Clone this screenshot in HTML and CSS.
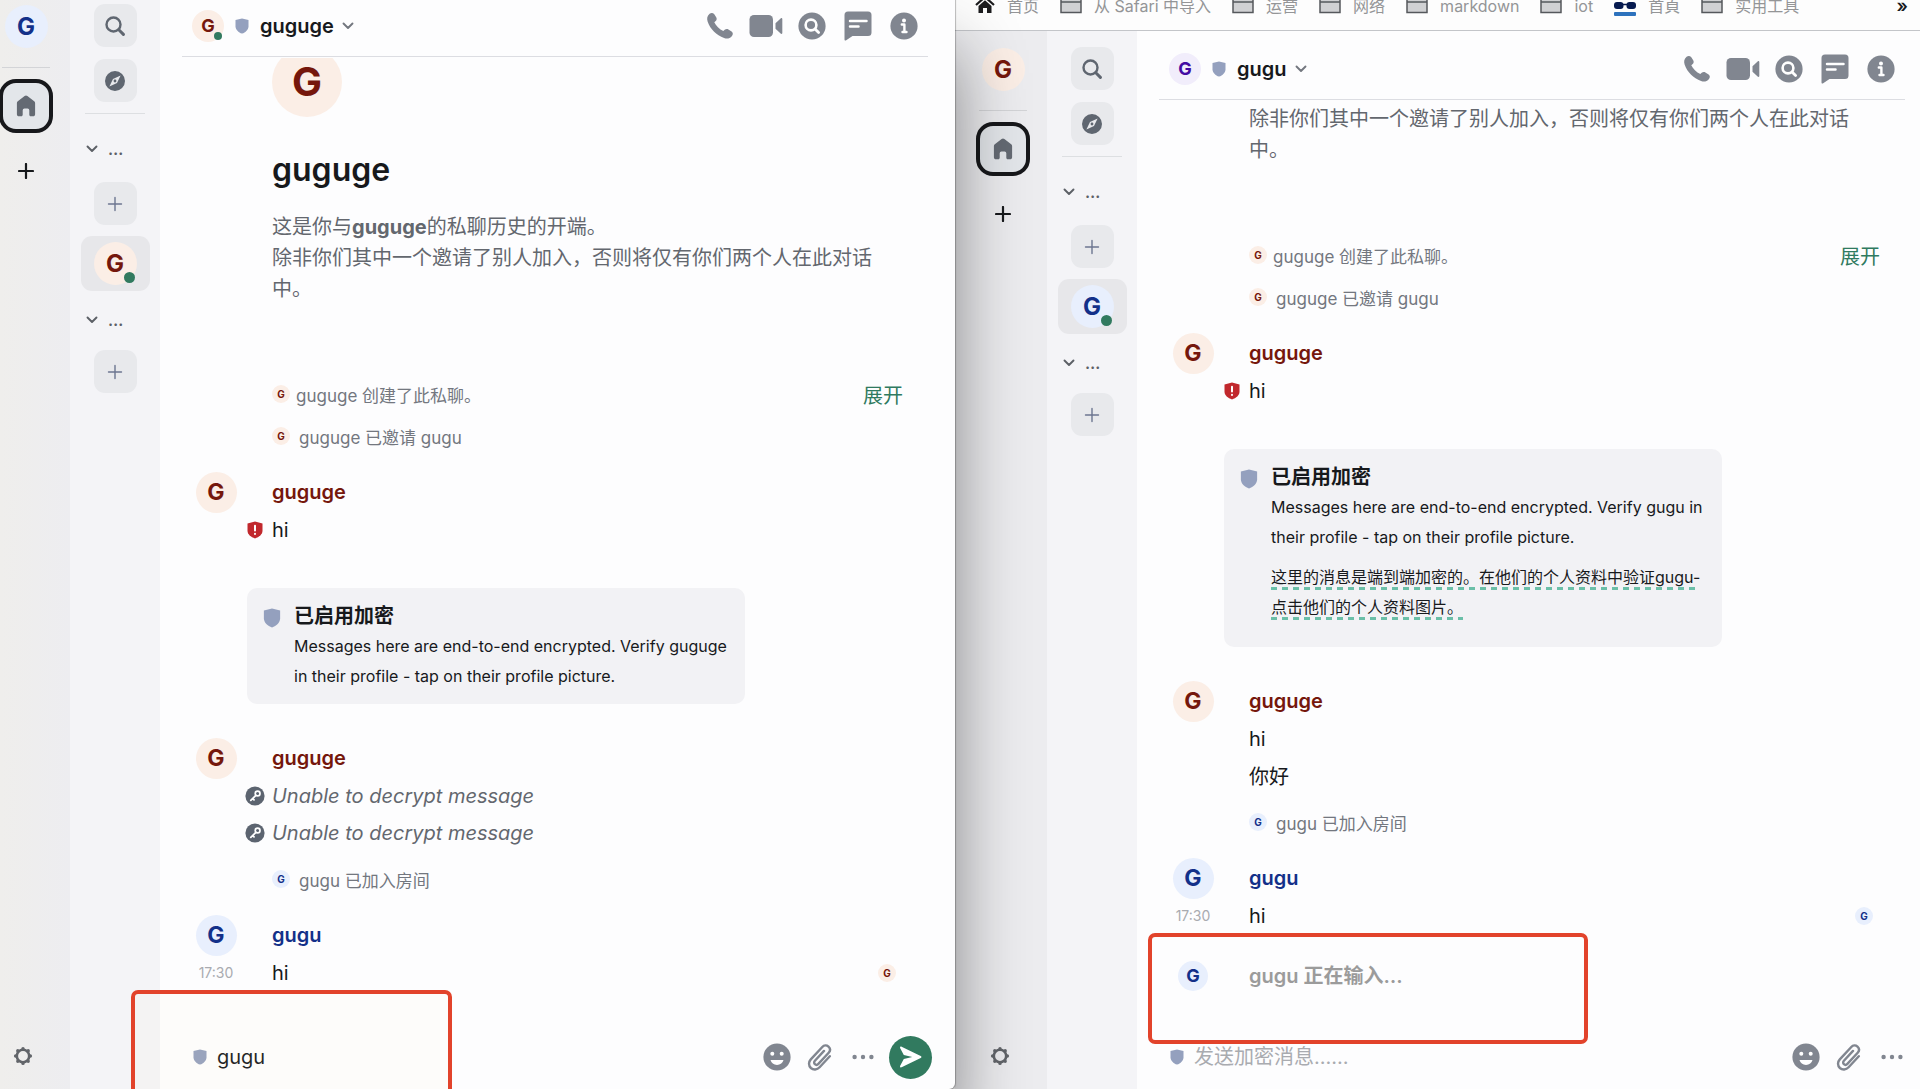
FILE: index.html
```html
<!DOCTYPE html>
<html lang="zh-CN">
<head>
<meta charset="utf-8">
<title>guguge</title>
<link rel="stylesheet" href="styles.css">
</head>
<body>
<svg class="sprite" aria-hidden="true">
  <symbol id="i-search" viewBox="0 0 20 20"><circle cx="8.5" cy="8.5" r="7" fill="none" stroke="currentColor" stroke-width="2.4"/><path d="M13.8 13.8 18.4 18.4" stroke="currentColor" stroke-width="3" stroke-linecap="round"/></symbol>
  <symbol id="i-compass" viewBox="0 0 20 20"><path fill="currentColor" fill-rule="evenodd" d="M10 0a10 10 0 1 0 0 20 10 10 0 0 0 0-20ZM15.6 4.4 12 12l-7.6 3.6L8 8l7.600-3.600ZM10 8.600a1.400 1.400 0 1 0 0 2.800 1.400 1.400 0 0 0 0-2.800Z"/></symbol>
  <symbol id="i-home" viewBox="0 0 20 22"><path fill="currentColor" d="M8.600 1.100a2.200 2.200 0 0 1 2.800 0l6.800 5.200c.6.5.9 1.100.9 1.800v11.100c0 1.300-.9 2.100-2.100 2.100h-2.200c-.9 0-1.500-.6-1.500-1.500v-4.600a1.700 1.700 0 0 0-1.700-1.700H8.400a1.700 1.700 0 0 0-1.700 1.700v4.600c0 .9-.6 1.500-1.500 1.500H3c-1.200 0-2.100-.8-2.100-2.100V8.100c0-.7.3-1.300.9-1.800Z"/></symbol>
  <symbol id="i-plus" viewBox="0 0 16 16"><path d="M8 1v14M1 8h14" stroke="currentColor" stroke-width="2.200" stroke-linecap="round"/></symbol>
  <symbol id="i-plus-thin" viewBox="0 0 16 16"><path d="M8 1.500v13M1.500 8h13" stroke="currentColor" stroke-width="1.400" stroke-linecap="round"/></symbol>
  <symbol id="i-gear" viewBox="0 0 20 20"><circle cx="10" cy="10" r="6.200" fill="none" stroke="currentColor" stroke-width="2.600"/><g stroke="currentColor" stroke-width="3.400" stroke-linecap="round"><path d="M10 2.600v.1M10 17.300v.1M2.600 10h.1M17.300 10h.1M4.800 4.800v.1M15.200 4.800v.1M4.800 15.200v.1M15.200 15.200v.1"/></g></symbol>
  <symbol id="i-shield" viewBox="0 0 14 16"><path fill="currentColor" d="M7 .4 13.500 2v6.200c0 3.500-3 6.200-6.500 7.400C3.500 14.400.5 11.700.5 8.200V2Z"/></symbol>
  <symbol id="i-chevron" viewBox="0 0 12 8"><path d="M1.500 1.500 6 6l4.500-4.500" fill="none" stroke="currentColor" stroke-width="1.900" stroke-linecap="round" stroke-linejoin="round"/></symbol>
  <symbol id="i-phone" viewBox="0 0 28 28"><path fill="currentColor" d="M3.600 1.800C5 .6 7 .6 8.300 2.200l1.900 3c.8 1.300.6 2.700-.5 3.700L8.300 10.200c1.500 3.400 5.200 7.100 9 8.900l1.400-1.300c1-1 2.500-1.200 3.700-.4l3.200 2.200c1.500 1.100 1.600 3 .4 4.300-2.200 2.500-4.700 3.300-7.900 2.100C10.300 23.200 4.200 17.200 1.600 9.600.7 6.600 1.100 3.900 3.600 1.800Z"/></symbol>
  <symbol id="i-video" viewBox="0 0 34 24"><rect x="0.500" y="1" width="23.500" height="22" rx="4.500" fill="currentColor"/><path fill="currentColor" d="M26.500 9.300 31.600 4.400c.8-.7 1.700-.4 1.700.7v13.800c0 1.100-.9 1.400-1.700.7l-5.100-4.900Z"/></symbol>
  <symbol id="i-find" viewBox="0 0 28 28"><circle cx="14" cy="14" r="13.600" fill="currentColor"/><circle cx="13" cy="13" r="5.400" fill="none" stroke="#fff" stroke-width="2.600"/><path d="M17 17l3.600 3.600" stroke="#fff" stroke-width="2.800" stroke-linecap="round"/></symbol>
  <symbol id="i-thread" viewBox="0 0 28 30"><path fill="currentColor" d="M4 .5h20A3.500 3.500 0 0 1 27.500 4v17.500A3.500 3.500 0 0 1 24 25H8.500l-6.300 4.200C1.200 29.900.5 29.500.5 28.300V4A3.500 3.500 0 0 1 4 .5Z"/><path d="M6 10h16.500M6 15.500h8.500" stroke="#fff" stroke-width="2.500" stroke-linecap="round"/></symbol>
  <symbol id="i-info" viewBox="0 0 28 28"><circle cx="14" cy="14" r="13.600" fill="currentColor"/><circle cx="14" cy="8.400" r="2" fill="#fff"/><path d="M11.800 12.500h2.600v7.300M12.500 20h4" fill="none" stroke="#fff" stroke-width="2.400" stroke-linecap="round" stroke-linejoin="round"/></symbol>
  <symbol id="i-emoji" viewBox="0 0 28 28"><circle cx="14" cy="14" r="13.600" fill="currentColor"/><circle cx="9.300" cy="10.800" r="2" fill="#fff"/><circle cx="18.700" cy="10.800" r="2" fill="#fff"/><path fill="#fff" d="M7.500 17h13c-.7 2.900-3.300 4.900-6.500 4.900S8.200 19.900 7.500 17Z"/></symbol>
  <symbol id="i-clip" viewBox="0 0 26 28"><path d="M22.800 13.200 12.600 24.300c-2.500 2.700-6.300 2.800-8.700.7-2.500-2.300-2.500-6-.1-8.600L15.300 4C17 2.200 19.600 2 21.500 3.700c1.800 1.700 1.900 4.200.2 6.100L11.400 20.900c-1 1.100-2.500 1.200-3.500.3s-1-2.400 0-3.500L17 7.900" fill="none" stroke="currentColor" stroke-width="2.400" stroke-linecap="round"/></symbol>
  <symbol id="i-more" viewBox="0 0 22 6"><g fill="currentColor"><circle cx="2.600" cy="3" r="2.200"/><circle cx="11" cy="3" r="2.200"/><circle cx="19.400" cy="3" r="2.200"/></g></symbol>
  <symbol id="i-send" viewBox="0 0 22 22"><path fill="#fff" d="M1.600.7 20.700 9.900c1 .5 1 1.700 0 2.200L1.600 21.300c-1.100.5-1.900-.4-1.400-1.500L3.800 13l8.500-2L3.800 9 .2 2.200C-.3 1.100.5.200 1.600.7Z"/></symbol>
  <symbol id="i-warn" viewBox="0 0 20 20"><path fill="#c1282d" d="M10 1.500 17.500 3.600v7c0 3.800-3.300 6.600-7.500 7.900-4.200-1.300-7.500-4.100-7.500-7.900v-7Z"/><path d="M10 5.800v4.800M10 13.700v.2" stroke="#fff" stroke-width="2" stroke-linecap="round"/></symbol>
  <symbol id="i-key" viewBox="0 0 20 20"><circle cx="10" cy="10" r="9.600" fill="#5c6470"/><circle cx="12.600" cy="7.500" r="2.400" fill="none" stroke="#fff" stroke-width="1.700"/><path d="M10.900 9.300 5.800 14.300M7.700 12.600l1.300 1.300" stroke="#fff" stroke-width="1.800" stroke-linecap="round"/></symbol>
  <symbol id="i-folder" viewBox="0 0 22 22"><path d="M1 3.500h8l2 2h10v15H1Z" fill="#d0d1d3" stroke="#55585c" stroke-width="1.500"/><path d="M1 10h20" stroke="#55585c" stroke-width="1.500"/></symbol>
  <symbol id="i-house" viewBox="0 0 20 20"><path d="M1 12 10 4l9 8" fill="none" stroke="#1c1c1e" stroke-width="2.200"/><path fill="#1c1c1e" d="M3.500 13 10 7.300l6.500 5.700V20H12v-5H8v5H3.500Z"/></symbol>
  <symbol id="i-glasses" viewBox="0 0 22 22"><rect y="7" width="9.500" height="7" rx="3" fill="#061a4f"/><rect x="12.500" y="7" width="9.500" height="7" rx="3" fill="#061a4f"/><path d="M8 9.500h6" stroke="#061a4f" stroke-width="1.500"/><rect y="17" width="22" height="4" rx="1" fill="#2d72bd"/></symbol>
</svg>

<div class="desktop">
  <section class="window front" aria-label="guguge">
    <div class="app">
      <nav class="spaces" aria-label="空间">
        <div class="spaces-col">
          <span class="avatar a42 blue">G</span>
          <hr>
          <button class="home" aria-label="主页"><svg><use href="#i-home"/></svg></button>
          <button class="add-space" aria-label="新建空间"><svg><use href="#i-plus"/></svg></button>
          <button class="gear" aria-label="设置"><svg><use href="#i-gear"/></svg></button>
        </div>
      </nav>
      <nav class="rooms" aria-label="房间">
        <button class="square" aria-label="搜索"><svg class="s20"><use href="#i-search"/></svg></button>
        <button class="square explore" aria-label="探索"><svg class="s20"><use href="#i-compass"/></svg></button>
        <hr>
        <button class="section first"><svg><use href="#i-chevron"/></svg><span>…</span></button>
        <button class="square plus" aria-label="新私聊"><svg><use href="#i-plus-thin"/></svg></button>
        <button class="room" aria-label="guguge"><span class="avatar a42 red">G<i class="online"></i></span></button>
        <button class="section second"><svg><use href="#i-chevron"/></svg><span>…</span></button>
        <button class="square plus" aria-label="新房间"><svg><use href="#i-plus-thin"/></svg></button>
      </nav>
      <main class="chat">
        <header class="bar">
          <span class="avatar a32 red">G<i class="online"></i></span>
          <svg class="shield"><use href="#i-shield"/></svg>
          <h1><button class="room-title">guguge<svg><use href="#i-chevron"/></svg></button></h1>
          <div class="tools">
            <button aria-label="语音通话"><svg class="s28"><use href="#i-phone"/></svg></button>
            <button aria-label="视频通话"><svg class="s34"><use href="#i-video"/></svg></button>
            <button aria-label="搜索"><svg class="s28"><use href="#i-find"/></svg></button>
            <button aria-label="消息列"><svg class="s30"><use href="#i-thread"/></svg></button>
            <button aria-label="房间信息"><svg class="s28"><use href="#i-info"/></svg></button>
          </div>
        </header>
        <div class="timeline">
          <div class="intro">
            <span class="avatar a70 red">G</span>
            <h2>guguge</h2>
            <p>这是你与<b>guguge</b>的私聊历史的开端。<br>除非你们其中一个邀请了别人加入，否则将仅有你们两个人在此对话中。</p>
          </div>
          <div class="event summary"><span class="avatar a18 red">G</span><span>guguge 创建了此私聊。</span><button class="expand">展开</button></div>
          <div class="event"><span class="avatar a18 red">G</span><span>guguge 已邀请 gugu</span></div>
          <div class="line sender"><div class="side"><span class="avatar a41 red">G</span></div><strong class="name-red">guguge</strong></div>
          <div class="line"><div class="side mark"><svg class="s20"><use href="#i-warn"/></svg></div><span>hi</span></div>
          <div class="bubble">
            <svg><use href="#i-shield"/></svg>
            <div><h3>已启用加密</h3><p>Messages here are end-to-end encrypted. Verify guguge in their profile - tap on their profile picture.</p></div>
          </div>
          <div class="line sender"><div class="side"><span class="avatar a41 red">G</span></div><strong class="name-red">guguge</strong></div>
          <div class="line"><div class="side mark"><svg class="s20"><use href="#i-key"/></svg></div><em>Unable to decrypt message</em></div>
          <div class="line"><div class="side mark"><svg class="s20"><use href="#i-key"/></svg></div><em>Unable to decrypt message</em></div>
          <div class="event joined"><span class="avatar a18 blue">G</span><span>gugu 已加入房间</span></div>
          <div class="line sender"><div class="side"><span class="avatar a41 blue">G</span></div><strong class="name-blue">gugu</strong></div>
          <div class="line"><time class="side">17:30</time><span>hi</span><span class="avatar a18 red receipt">G</span></div>
        </div>
        <form class="composer">
          <svg class="shield"><use href="#i-shield"/></svg>
          <input type="text" value="gugu" aria-label="消息">
          <button type="button" aria-label="表情"><svg class="s28"><use href="#i-emoji"/></svg></button>
          <button type="button" aria-label="附件"><svg class="clip"><use href="#i-clip"/></svg></button>
          <button type="button" aria-label="更多"><svg class="more"><use href="#i-more"/></svg></button>
          <button type="button" class="send" aria-label="发送"><svg><use href="#i-send"/></svg></button>
        </form>
        <div class="marker marker-input"></div>
      </main>
    </div>
  </section>

  <section class="window back" aria-label="gugu">
    <nav class="bookmarks" aria-label="书签">
      <a href="#"><svg class="house"><use href="#i-house"/></svg>首页</a>
      <a href="#"><svg><use href="#i-folder"/></svg>从 Safari 中导入</a>
      <a href="#"><svg><use href="#i-folder"/></svg>运营</a>
      <a href="#"><svg><use href="#i-folder"/></svg>网络</a>
      <a href="#"><svg><use href="#i-folder"/></svg>markdown</a>
      <a href="#"><svg><use href="#i-folder"/></svg>iot</a>
      <a href="#"><svg class="glasses"><use href="#i-glasses"/></svg>首頁</a>
      <a href="#"><svg><use href="#i-folder"/></svg>实用工具</a>
      <button class="overflow">»</button>
    </nav>
    <div class="app">
      <nav class="spaces" aria-label="空间">
        <div class="spaces-col">
          <span class="avatar a42 red">G</span>
          <hr>
          <button class="home" aria-label="主页"><svg><use href="#i-home"/></svg></button>
          <button class="add-space" aria-label="新建空间"><svg><use href="#i-plus"/></svg></button>
          <button class="gear" aria-label="设置"><svg><use href="#i-gear"/></svg></button>
        </div>
      </nav>
      <nav class="rooms" aria-label="房间">
        <button class="square" aria-label="搜索"><svg class="s20"><use href="#i-search"/></svg></button>
        <button class="square explore" aria-label="探索"><svg class="s20"><use href="#i-compass"/></svg></button>
        <hr>
        <button class="section first"><svg><use href="#i-chevron"/></svg><span>…</span></button>
        <button class="square plus" aria-label="新私聊"><svg><use href="#i-plus-thin"/></svg></button>
        <button class="room" aria-label="gugu"><span class="avatar a42 blue">G<i class="online"></i></span></button>
        <button class="section second"><svg><use href="#i-chevron"/></svg><span>…</span></button>
        <button class="square plus" aria-label="新房间"><svg><use href="#i-plus-thin"/></svg></button>
      </nav>
      <main class="chat">
        <header class="bar">
          <span class="avatar a32 purple">G</span>
          <svg class="shield"><use href="#i-shield"/></svg>
          <h1><button class="room-title">gugu<svg><use href="#i-chevron"/></svg></button></h1>
          <div class="tools">
            <button aria-label="语音通话"><svg class="s28"><use href="#i-phone"/></svg></button>
            <button aria-label="视频通话"><svg class="s34"><use href="#i-video"/></svg></button>
            <button aria-label="搜索"><svg class="s28"><use href="#i-find"/></svg></button>
            <button aria-label="消息列"><svg class="s30"><use href="#i-thread"/></svg></button>
            <button aria-label="房间信息"><svg class="s28"><use href="#i-info"/></svg></button>
          </div>
        </header>
        <div class="timeline">
          <div class="intro"><p>除非你们其中一个邀请了别人加入，否则将仅有你们两个人在此对话中。</p></div>
          <div class="event summary"><span class="avatar a18 red">G</span><span>guguge 创建了此私聊。</span><button class="expand">展开</button></div>
          <div class="event"><span class="avatar a18 red">G</span><span>guguge 已邀请 gugu</span></div>
          <div class="line sender"><div class="side"><span class="avatar a41 red">G</span></div><strong class="name-red">guguge</strong></div>
          <div class="line"><div class="side mark"><svg class="s20"><use href="#i-warn"/></svg></div><span>hi</span></div>
          <div class="bubble">
            <svg><use href="#i-shield"/></svg>
            <div><h3>已启用加密</h3><p>Messages here are end-to-end encrypted. Verify gugu in their profile - tap on their profile picture.</p>
            <p class="translation"><span>这里的消息是端到端加密的。在他们的个人资料中验证gugu-点击他们的个人资料图片。</span></p></div>
          </div>
          <div class="line sender"><div class="side"><span class="avatar a41 red">G</span></div><strong class="name-red">guguge</strong></div>
          <div class="line"><div class="side"></div><span>hi</span></div>
          <div class="line"><div class="side"></div><span>你好</span></div>
          <div class="event joined"><span class="avatar a18 blue">G</span><span>gugu 已加入房间</span></div>
          <div class="line sender"><div class="side"><span class="avatar a41 blue">G</span></div><strong class="name-blue">gugu</strong></div>
          <div class="line"><time class="side">17:30</time><span>hi</span><span class="avatar a18 blue receipt">G</span></div>
          <div class="typing"><div class="side"><span class="avatar a30 blue">G</span></div><span>gugu 正在输入…</span></div>
        </div>
        <form class="composer">
          <svg class="shield"><use href="#i-shield"/></svg>
          <input type="text" placeholder="发送加密消息……" aria-label="消息">
          <button type="button" aria-label="表情"><svg class="s28"><use href="#i-emoji"/></svg></button>
          <button type="button" aria-label="附件"><svg class="clip"><use href="#i-clip"/></svg></button>
          <button type="button" aria-label="更多"><svg class="more"><use href="#i-more"/></svg></button>
        </form>
        <div class="marker marker-typing"></div>
      </main>
    </div>
  </section>
</div>
</body>
</html>
```

FILE: styles.css
```css
* { box-sizing: border-box; margin: 0; padding: 0; }

body {
  font-family: Inter, "Noto Sans CJK SC", sans-serif;
  font-size: 20px;
  color: #17191c;
  background: #fdfdfe;
}

button, input { font: inherit; color: inherit; background: none; border: 0; }
button { display: flex; align-items: center; justify-content: center; flex: none; cursor: pointer; }
svg { display: block; flex: none; }
.sprite { position: absolute; width: 0; height: 0; }

/* Two overlapping windows */
.desktop {
  display: grid;
  grid-template-columns: 955fr 965fr;
  height: 100vh;
  overflow: hidden;
}
.window { display: flex; flex-direction: column; min-width: 0; min-height: 0; background: #fdfdfe; }
.front {
  --lead: 0px; --inset: 0px; --gutter: 27px; --composer-end: 23px;
  position: relative;
  z-index: 1;
  border-bottom-right-radius: 6px;
  box-shadow: 0 0 1px 1px rgba(0, 0, 0, .25), 0 50px 70px rgba(0, 0, 0, .45);
}
.back { --lead: 12px; --inset: 22px; --gutter: 15px; --composer-end: 7px; }
.app { display: flex; flex: 1; min-height: 0; }

/* Bookmarks bar */
.bookmarks {
  display: flex;
  align-items: flex-end;
  gap: 21px;
  height: 31px;
  padding: 0 12px 12px 20px;
  overflow: hidden;
  border-bottom: 1px solid #c3c5c9;
  background: #fdfdfd;
}
.bookmarks a {
  display: flex;
  align-items: flex-end;
  gap: 12px;
  height: 24px;
  font-size: 16px;
  line-height: 24px;
  color: #949597;
  text-decoration: none;
  white-space: nowrap;
}
.bookmarks svg { width: 22px; height: 22px; margin-bottom: 4px; }
.bookmarks .house { width: 20px; }
.bookmarks .glasses { margin-bottom: 1px; }
.overflow { margin-left: auto; height: 24px; line-height: 24px; font-weight: 600; font-size: 18px; }

/* Avatars */
.avatar {
  position: relative;
  display: flex;
  align-items: center;
  justify-content: center;
  flex: none;
  border-radius: 50%;
  font-weight: 700;
  line-height: 1;
}
.a18 { width: 18px; height: 18px; font-size: 10px; }
.a30 { width: 30px; height: 30px; font-size: 18px; }
.a32 { width: 32px; height: 32px; font-size: 18px; }
.a41 { width: 41px; height: 41px; font-size: 23px; }
.a42 { width: 43px; height: 43px; font-size: 24px; }
.a70 { width: 70px; height: 70px; font-size: 40px; }
.red { color: #75170c; background: #fbeee6; }
.blue { color: #133089; background: #e8effd; }
.purple { color: #430ba3; background: #f1edfb; }
.online {
  position: absolute;
  right: 2px;
  bottom: 2px;
  width: 11px;
  height: 11px;
  border-radius: 50%;
  background: #317a5f;
}
.a32 .online { width: 8px; height: 8px; }

hr { flex: none; height: 1px; border: 0; background: #d3d4d7; }

/* Spaces column */
.spaces {
  flex: none;
  width: calc(70px + var(--inset));
  padding-left: var(--inset);
  background: #ececef;
}
.front .spaces { background: linear-gradient(90deg, #efeeec, #ededf0); }
.spaces-col {
  display: flex;
  flex-direction: column;
  align-items: center;
  width: 52px;
  height: 100%;
  padding-top: calc(5px + var(--lead));
}
.spaces hr { width: 48px; margin-top: 19px; }
.home {
  width: 54px;
  height: 54px;
  margin-top: 11px;
  border: 4px solid #17181b;
  border-radius: 17px;
  background: #e3e6ea;
  color: #646a73;
}
.home svg { width: 20px; height: 22px; }
.add-space { width: 24px; height: 24px; margin-top: 26px; }
.add-space svg { width: 16px; height: 16px; }
.gear { width: 46px; height: 32px; margin: auto auto 17px 0; color: #62656a; }
.gear svg { width: 20px; height: 20px; }

/* Room list column */
.rooms {
  display: flex;
  flex-direction: column;
  align-items: center;
  flex: none;
  width: 90px;
  padding-top: calc(4px + var(--lead));
  background: #f4f4f7;
}
.rooms hr { width: 60px; margin-top: 11px; background: #dddfe2; }
.square {
  width: 43px;
  height: 43px;
  border-radius: 11px;
  background: #e8e9ec;
  color: #5f6670;
}
.explore { margin-top: 12px; }
.plus svg { width: 16px; height: 16px; color: #6c7590; }
.s20 { width: 20px; height: 20px; }
.section {
  align-self: stretch;
  justify-content: flex-start;
  gap: 10px;
  height: 24px;
  padding-left: 16px;
  font-size: 16px;
  font-weight: 600;
  color: #5c6066;
}
.section svg { width: 12px; height: 8px; }
.section.first { margin: 23px 0 21px; }
.section.second { margin: 17px 0 18px; }
.room { width: 69px; height: 55px; margin-top: 11px; border-radius: 11px; background: #e7e7ea; }

/* Conversation */
.chat { position: relative; display: flex; flex-direction: column; flex: 1; min-width: 0; }
.bar {
  display: flex;
  align-items: center;
  flex: none;
  margin: 0 var(--gutter) 0 22px;
  padding: var(--lead) 10px 4px 10px;
  border-bottom: 1px solid #dcdde2;
}
.shield { width: 14px; height: 16px; color: #94a0be; }
.bar .shield { margin: 0 11px; }
.bar h1 { font-size: 20px; font-weight: 600; }
.room-title { gap: 8px; height: 52px; }
.room-title svg { width: 12px; height: 8px; color: #73777f; }
.tools { display: flex; gap: 18px; margin-left: auto; color: #818690; }
.tools button { width: 28px; height: 28px; }
.s28 { width: 28px; height: 28px; }
.s34 { width: 34px; height: 24px; }
.s30 { width: 28px; height: 30px; }

.timeline {
  display: flex;
  flex-direction: column;
  justify-content: flex-end;
  flex: 1;
  min-height: 0;
  overflow: hidden;
  padding: 0 calc(var(--gutter) + 25px) 34px 0;
  margin-top: 1px;
}
.timeline > * { flex: none; }
.intro { padding: 0 20px 68px 112px; color: #63676e; line-height: 31px; }
.intro h2 { margin: 31px 0 20px; font-size: 32px; line-height: 44px; font-weight: 600; color: #17191c; }

.event {
  display: flex;
  align-items: center;
  gap: 9px;
  height: 42px;
  padding-left: 112px;
  font-size: 17px;
  color: #73777f;
}
.summary { gap: 6px; }
.joined { margin-top: 7px; }
.expand { margin-left: auto; font-size: 20px; color: #2f7a60; }

.line { display: flex; align-items: center; height: 37px; }
.sender { height: 38px; }
.event + .sender { margin-top: 16px; }
.line em { color: #63676e; }
.side { display: flex; align-items: center; justify-content: center; flex: none; width: 112px; }
.side.mark { justify-content: flex-end; padding-right: 7px; }
time.side { font-size: 14px; color: #a9abb0; }
.name-red { font-weight: 600; color: #75170c; }
.name-blue { font-weight: 600; color: #133089; }
.receipt { margin: 0 7px 0 auto; }

.bubble {
  display: flex;
  align-items: flex-start;
  gap: 13px;
  width: 498px;
  margin: 40px 0 35px 87px;
  padding: 14px 18px 13px 16px;
  border-radius: 10px;
  background: #f2f2f5;
}
.bubble svg { width: 18px; height: 20px; margin-top: 6px; color: #94a0be; }
.bubble h3 { font-size: 20px; line-height: 29px; font-weight: 600; }
.bubble p { font-size: 16px; line-height: 30px; }
.bubble .translation { margin: 10px 0 12px; }
.translation span {
  padding-bottom: 3px;
  background: linear-gradient(90deg, #6bbfa8 6px, transparent 6px) 0 100% / 11px 3px repeat-x;
  -webkit-box-decoration-break: clone;
  box-decoration-break: clone;
}

.typing {
  display: flex;
  align-items: flex-end;
  height: 57px;
  line-height: 30px;
  font-weight: 600;
  color: #9b9b9b;
}

/* Composer */
.composer {
  display: flex;
  align-items: center;
  flex: none;
  height: 64px;
  padding: 0 var(--composer-end) 0 33px;
}
.composer input { flex: 1; min-width: 0; margin-left: 10px; height: 32px; outline: 0; }
.composer input::placeholder { color: #a9abb0; opacity: 1; }
.composer button { width: 43px; height: 43px; color: #818690; }
.clip { width: 26px; height: 28px; }
.more { width: 22px; height: 6px; }
.composer .send { margin-left: 5px; border-radius: 50%; background: #317a5f; }
.send svg { width: 22px; height: 22px; }

/* Hand-drawn highlight frames over the conversation */
.marker { position: absolute; border: 4px solid #e2432b; border-radius: 7px; pointer-events: none; }
.marker-input {
  left: -29px;
  bottom: 0;
  width: 321px;
  height: 99px;
  border-bottom: 0;
  border-radius: 7px 7px 0 0;
  background: rgba(255, 240, 190, .06);
}
.marker-typing { left: 11px; bottom: 45px; width: 440px; height: 111px; }
```
